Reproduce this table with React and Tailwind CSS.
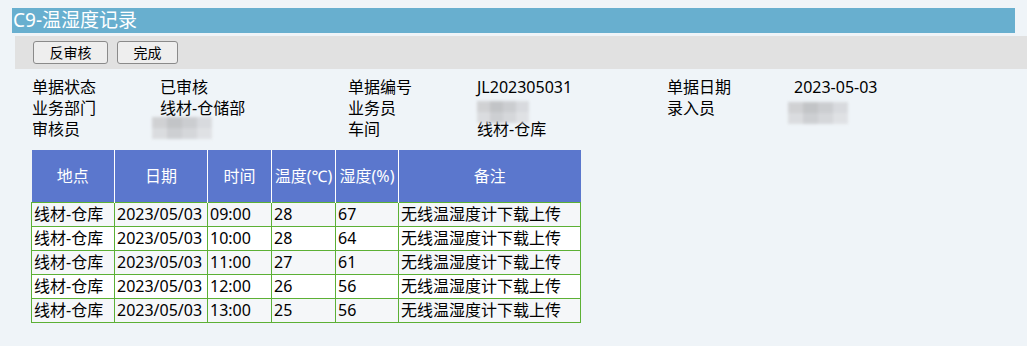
import React from 'react';

const rows = [
    { place: '线材-仓库', date: '2023/05/03', time: '09:00', temp: '28', hum: '67', note: '无线温湿度计下载上传' },
    { place: '线材-仓库', date: '2023/05/03', time: '10:00', temp: '28', hum: '64', note: '无线温湿度计下载上传' },
    { place: '线材-仓库', date: '2023/05/03', time: '11:00', temp: '27', hum: '61', note: '无线温湿度计下载上传' },
    { place: '线材-仓库', date: '2023/05/03', time: '12:00', temp: '26', hum: '56', note: '无线温湿度计下载上传' },
    { place: '线材-仓库', date: '2023/05/03', time: '13:00', temp: '25', hum: '56', note: '无线温湿度计下载上传' },
];

// pixelated blur used to hide names
const Masked = ({ w }) => (
    <div className="flex flex-col blur-[1.5px] opacity-80" style={{ width: w }}>
        <div className="flex h-[11px]">
            <div className="flex-1 bg-[#c9c9cb]" />
            <div className="flex-1 bg-[#b8b9bb]" />
            <div className="flex-1 bg-[#c3c4c7]" />
            <div className="flex-1 bg-[#d3d4d8]" />
        </div>
        <div className="flex h-[11px]">
            <div className="flex-1 bg-[#d6d7d9]" />
            <div className="flex-1 bg-[#c5c6c9]" />
            <div className="flex-1 bg-[#cfd0d3]" />
            <div className="flex-1 bg-[#dcdde0]" />
        </div>
    </div>
);

const App = () => {
    return (
        <div
            className="w-[1027px] h-[346px] bg-[#eff4f8] overflow-hidden pt-2 text-[16px] text-black"
            style={{ fontFamily: '"Noto Sans", "Noto Sans CJK SC", sans-serif' }}
        >
            {/* Title */}
            <div className="ml-3 mr-3 h-[25px] bg-[#68afcf] flex items-center pl-[1px] text-white text-[19px] leading-none">
                C9-温湿度记录
            </div>

            {/* Toolbar */}
            <div className="ml-[15px] mt-[3px] h-[33px] bg-[#e1e1e1] flex items-center gap-[9px] pl-[18px]">
                <button className="w-[75px] h-[23px] border border-[#8a8a8a] rounded-[3px] bg-[#eeeeee] text-[14px] leading-none">反审核</button>
                <button className="w-[61px] h-[23px] border border-[#8a8a8a] rounded-[3px] bg-[#eeeeee] text-[14px] leading-none">完成</button>
            </div>

            {/* Header info */}
            <div className="ml-8 mt-[8px] grid grid-cols-[128px_188px_129px_190px_127px_1fr] auto-rows-[21px] leading-[21px]">
                <div>单据状态</div>
                <div>已审核</div>
                <div>单据编号</div>
                <div>JL202305031</div>
                <div>单据日期</div>
                <div>2023-05-03</div>

                <div>业务部门</div>
                <div>线材-仓储部</div>
                <div>业务员</div>
                <div className="pt-[3px]"><Masked w={52} /></div>
                <div>录入员</div>
                <div className="pt-[4px] -ml-[6px]"><Masked w={60} /></div>

                <div>审核员</div>
                <div className="-ml-2 -mt-[2px]"><Masked w={60} /></div>
                <div>车间</div>
                <div>线材-仓库</div>
                <div />
                <div />
            </div>

            {/* Table */}
            <table className="ml-[31px] mt-[10px] border-collapse table-fixed w-[549px]">
                <colgroup>
                    <col className="w-[83px]" />
                    <col className="w-[93px]" />
                    <col className="w-[64px]" />
                    <col className="w-[64px]" />
                    <col className="w-[63px]" />
                    <col className="w-[182px]" />
                </colgroup>
                <thead>
                    <tr className="h-[52px] bg-[#5b77cd] text-white">
                        <th className="font-normal border-r border-white">地点</th>
                        <th className="font-normal border-r border-white">日期</th>
                        <th className="font-normal border-r border-white">时间</th>
                        <th className="font-normal border-r border-white px-0 whitespace-nowrap">温度(℃)</th>
                        <th className="font-normal border-r border-white px-0 whitespace-nowrap">湿度(%)</th>
                        <th className="font-normal">备注</th>
                    </tr>
                </thead>
                <tbody>
                    {rows.map((r, i) => (
                        <tr key={i} className={`h-[24px] leading-[22px] ${i % 2 === 0 ? 'bg-[#f5f7f9]' : 'bg-white'}`}>
                            <td className="border border-[#5cb035] px-[2px] whitespace-nowrap overflow-hidden">{r.place}</td>
                            <td className="border border-[#5cb035] px-[2px] whitespace-nowrap overflow-hidden">{r.date}</td>
                            <td className="border border-[#5cb035] px-[2px] whitespace-nowrap overflow-hidden">{r.time}</td>
                            <td className="border border-[#5cb035] px-[2px] whitespace-nowrap overflow-hidden">{r.temp}</td>
                            <td className="border border-[#5cb035] px-[2px] whitespace-nowrap overflow-hidden">{r.hum}</td>
                            <td className="border border-[#5cb035] px-[2px] whitespace-nowrap overflow-hidden">{r.note}</td>
                        </tr>
                    ))}
                </tbody>
            </table>
        </div>
    );
};

export default App;
